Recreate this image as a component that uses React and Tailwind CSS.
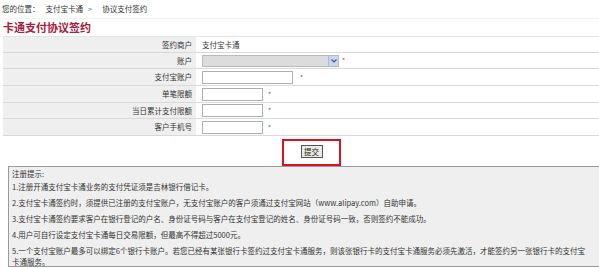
import React from "react";

// 协议支付签约 — 表单 + 注册提示

const rows = [
  { h: "h-[16px]", label: "签约商户", kind: "text" },
  { h: "h-[16px]", label: "账户", kind: "select" },
  { h: "h-[17px]", label: "支付宝账户", kind: "wide" },
  { h: "h-[17px]", label: "单笔限额", kind: "short" },
  { h: "h-[16px]", label: "当日累计支付限额", kind: "short" },
  { h: "h-[17px]", label: "客户手机号", kind: "short" },
];

function Star({ gap = "ml-[6px]" }) {
  return <span className={`${gap} text-[7px] leading-none text-[#c4343a]`}>*</span>;
}

function Field({ kind }) {
  if (kind === "text") return <span>支付宝卡通</span>;
  if (kind === "select") {
    return (
      <div className="flex items-center">
        <div className="flex h-[12px] w-[137px] items-stretch border border-[#b9b9b9] bg-[#dcdcdc]">
          <div className="flex-1" />
          <div className="flex w-[10px] items-center justify-center border-l border-[#a9bcd9] bg-[#c9d8ef]">
            <svg width="6" height="4" viewBox="0 0 6 4">
              <path d="M0.5 0.5 L3 3 L5.5 0.5" fill="none" stroke="#3d5a8c" strokeWidth="1.2" />
            </svg>
          </div>
        </div>
        <Star gap="ml-[3px]" />
      </div>
    );
  }
  const w = kind === "wide" ? "w-[91px]" : "w-[61px]";
  return (
    <div className="flex items-center">
      <div className={`h-[13px] ${w} border border-[#aab0b6] bg-white`} />
      <Star gap={kind === "wide" ? "ml-[7px]" : "ml-[5px]"} />
    </div>
  );
}

export default function App() {
  return (
    <div
      className="relative h-[268px] w-[599px] overflow-hidden bg-white text-[7.5px] text-[#333]"
      style={{ fontFamily: '"Noto Sans CJK SC", "Noto Sans", sans-serif' }}
    >
      {/* 面包屑 */}
      <div className="flex h-[19px] items-center border-b border-[#f3f3f0] pl-[2px] leading-none">
        <span>您的位置：</span>
        <span className="ml-[6px]">支付宝卡通</span>
        <span className="ml-[5px] text-[#777]">&gt;</span>
        <span className="ml-[10px]">协议支付签约</span>
      </div>

      <div className="flex h-[17px] items-center pl-[3px] text-[11px] font-bold leading-none text-[#a4203c]">
        卡通支付协议签约
      </div>

      {/* 签约表单 */}
      <div className="ml-[3px] border-t border-[#e4e4e4]">
        {rows.map((r) => (
          <div key={r.label} className={`flex ${r.h} border-b border-[#d9d9d9]`}>
            <div className="flex w-[193px] items-center justify-end bg-[#efefef] pr-[4px]">{r.label}</div>
            <div className="flex flex-1 items-center pl-[6px]">
              <Field kind={r.kind} />
            </div>
          </div>
        ))}
      </div>

      {/* 提交 */}
      <div className="flex h-[30px] items-end pl-[282px]">
        <div className="flex h-[27px] w-[59px] items-start justify-center border-2 border-[#d8141f] pt-[4px]">
          <button className="flex h-[13px] w-[22px] items-center justify-center border border-[#555] bg-[#ebe9e0] text-[7.5px] leading-none text-[#222]">
            提交
          </button>
        </div>
      </div>

      {/* 注册提示 */}
      <div className="ml-[8px] h-[101px] w-[600px] border border-[#9a9a9a] bg-[#efefef] pl-[3px] pt-[1px] leading-[12px] whitespace-nowrap">
        <p className="mb-[1px]">注册提示:</p>
        <p className="mb-[4px]">1.注册开通支付宝卡通业务的支付凭证须是吉林银行借记卡。</p>
        <p className="mb-[4px]">2.支付宝卡通签约时，须提供已注册的支付宝账户，无支付宝账户的客户须通过支付宝网站（www.alipay.com）自助申请。</p>
        <p className="mb-[4px]">3.支付宝卡通签约要求客户在银行登记的户名、身份证号码与客户在支付宝登记的姓名、身份证号码一致，否则签约不能成功。</p>
        <p className="mb-[4px]">4.用户可自行设定支付宝卡通每日交易限额，但最高不得超过5000元。</p>
        <p className="leading-[11px]">
          5.一个支付宝账户最多可以绑定6个银行卡账户。若您已经有某张银行卡签约过支付宝卡通服务，则该张银行卡的支付宝卡通服务必须先激活，才能签约另一张银行卡的支付宝
          <br />
          卡通服务。
        </p>
      </div>
    </div>
  );
}
